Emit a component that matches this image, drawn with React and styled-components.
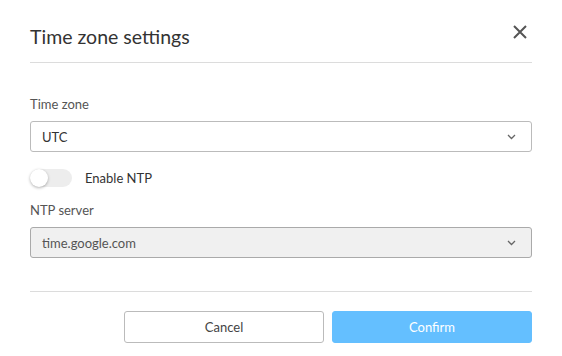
import React from "react";
import styled, { createGlobalStyle } from "styled-components";

const Global = createGlobalStyle`
  html, body { margin: 0; padding: 0; background: #fff; }
  body { font-family: "Lato", "Open Sans", sans-serif; color: #333; }
`;

const Dialog = styled.div`
  width: 562px;
  height: 356px;
  box-sizing: border-box;
  padding: 0 30px;
  display: flex;
  flex-direction: column;
`;

const Header = styled.div`
  height: 63px;
  box-sizing: border-box;
  padding-top: 24px;
  border-bottom: 1px solid #dcdcdc;
  display: flex;
  justify-content: space-between;
  align-items: flex-start;
`;

const Title = styled.h2`
  margin: 0;
  font-size: 19.5px;
  line-height: 26px;
  font-weight: 400;
  color: #333;
`;

const Close = styled.button`
  border: 0;
  background: none;
  padding: 0;
  margin: 1px 5px 0 0;
  width: 14px;
  height: 14px;
  display: flex;
  cursor: pointer;
`;

const Body = styled.div`
  display: flex;
  flex-direction: column;
  padding-top: 32px;
  padding-bottom: 33px;
  border-bottom: 1px solid #dcdcdc;
`;

const Label = styled.div`
  font-size: 13px;
  line-height: 18px;
  color: #555;
  margin-bottom: 8px;
`;

const Select = styled.div`
  height: 31px;
  box-sizing: border-box;
  border: 1px solid ${(p) => (p.disabled ? "#aaa" : "#bbb")};
  border-radius: 3px;
  background: ${(p) => (p.disabled ? "#f0f0f0" : "#fff")};
  display: flex;
  align-items: center;
  justify-content: space-between;
  padding: 0 15px 0 11px;
  font-size: 13px;
  color: ${(p) => (p.disabled ? "#555" : "#333")};
`;

const ToggleRow = styled.div`
  display: flex;
  align-items: center;
  gap: 13px;
  margin: 17px 0 14px;
  font-size: 13px;
  color: #333;
`;

const Track = styled.div`
  position: relative;
  width: 42px;
  height: 18px;
  border-radius: 9px;
  background: #ededed;
`;

const Knob = styled.div`
  position: absolute;
  left: 0;
  top: 0;
  width: 18px;
  height: 18px;
  border-radius: 50%;
  background: #fff;
  box-shadow: 0 1px 3px rgba(0, 0, 0, 0.3);
`;

const Footer = styled.div`
  display: flex;
  justify-content: flex-end;
  gap: 8px;
  padding-top: 19px;
`;

const Button = styled.button`
  width: 200px;
  height: 32px;
  box-sizing: border-box;
  border-radius: 3px;
  font-family: inherit;
  font-size: 13px;
  cursor: pointer;
  border: 1px solid ${(p) => (p.primary ? "#64bfff" : "#bbb")};
  background: ${(p) => (p.primary ? "#64bfff" : "#fff")};
  color: ${(p) => (p.primary ? "#fff" : "#444")};
`;

const Chevron = () => (
  <svg width="9" height="6" viewBox="0 0 9 6">
    <path d="M1 1l3.5 3.5L8 1" fill="none" stroke="#666" strokeWidth="1.3" />
  </svg>
);

export default function App() {
  return (
    <>
      <Global />
      <Dialog>
        <Header>
          <Title>Time zone settings</Title>
          <Close aria-label="Close">
            <svg width="14" height="14" viewBox="0 0 14 14">
              <path d="M1 1l12 12M13 1L1 13" stroke="#555" strokeWidth="2" />
            </svg>
          </Close>
        </Header>
        <Body>
          <Label>Time zone</Label>
          <Select>
            <span>UTC</span>
            <Chevron />
          </Select>
          <ToggleRow>
            <Track>
              <Knob />
            </Track>
            <span>Enable NTP</span>
          </ToggleRow>
          <Label>NTP server</Label>
          <Select disabled>
            <span>time.google.com</span>
            <Chevron />
          </Select>
        </Body>
        <Footer>
          <Button>Cancel</Button>
          <Button primary>Confirm</Button>
        </Footer>
      </Dialog>
    </>
  );
}
